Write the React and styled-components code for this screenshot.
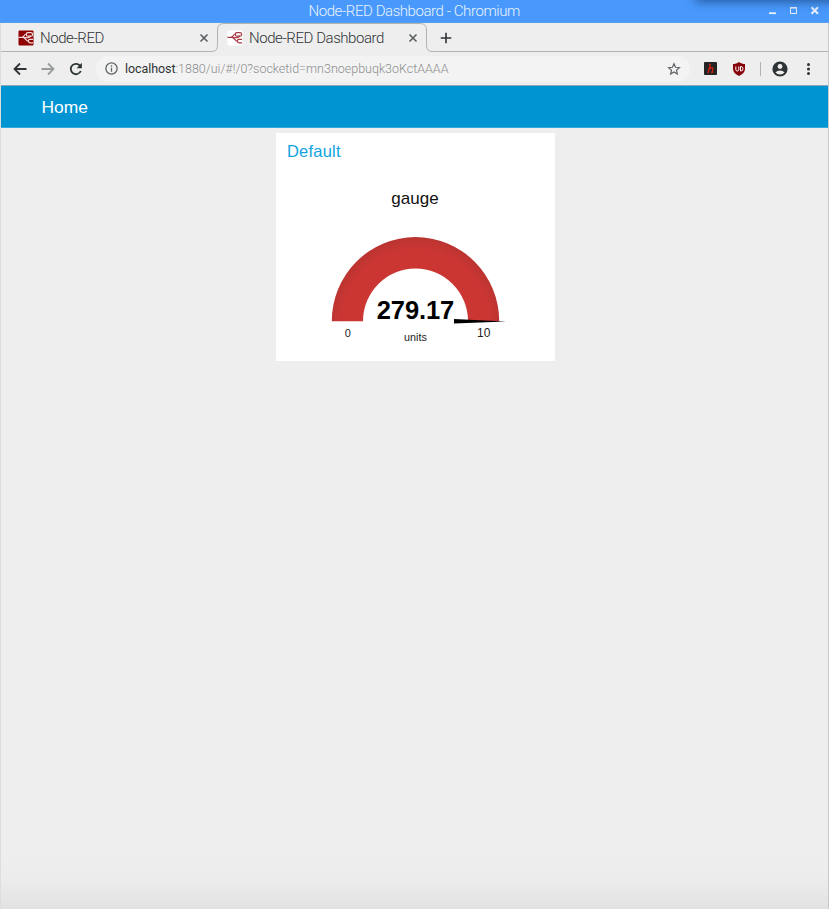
import React from "react";
import styled, { createGlobalStyle } from "styled-components";

const Global = createGlobalStyle`
  *{box-sizing:border-box}
  html,body{margin:0;padding:0}
  body{background:#eee;font-family:"Liberation Sans",Arial,sans-serif;overflow:hidden}
  svg{display:block;flex:none}
`;

const Window = styled.div`
  width:829px;height:909px;display:flex;flex-direction:column;background:#eee;
  border-left:1px solid #dedede;border-right:1px solid #c6c9ce;
`;
const TitleBar = styled.header`
  height:23px;flex:none;display:grid;grid-template-columns:1fr auto 1fr;align-items:center;
  margin:0 -1px;background:linear-gradient(#4899fb 0 22px,#579ff3 22px);
  color:#e9f3ff;font:300 15px/22px Roboto,sans-serif;overflow:hidden;
`;
const Title = styled.div`
  grid-column:2;white-space:nowrap;width:212px;height:23px;letter-spacing:-.43px;
`;
const WindowButtons = styled.div`
  height:23px;display:flex;justify-content:flex-end;position:relative;
  &::before{
    content:"";position:absolute;top:-10px;left:176px;right:-20px;height:10px;
    box-shadow:0 0 11px 1px rgba(25,60,115,.8);
  }
`;
const TabStrip = styled.div`
  height:29px;flex:none;display:flex;position:relative;
`;
const TabOutline = styled.svg`
  position:absolute;left:-1px;top:0;
`;
const Tab = styled.div`
  width:${p => p.$width}px;padding-left:${p => p.$inset}px;
  display:flex;align-items:center;position:relative;height:29px;
`;
const TabTitle = styled.span`
  font:300 15px/20px Roboto,sans-serif;color:#2e3436;margin-left:6px;
  white-space:nowrap;width:${p => p.$width}px;letter-spacing:-.43px;
`;
const Toolbar = styled.div`
  height:34px;flex:none;display:flex;align-items:center;padding-left:11px;
  border-bottom:1px solid #8eaab8;
`;
const NavButtons = styled.div`
  display:flex;align-items:center;gap:12px;width:84px;flex:none;
`;
const AddressBar = styled.div`
  width:594px;height:26px;border-radius:13px;background:#f3f3f3;display:flex;align-items:center;
  padding:0 9px 0 9px;flex:none;
`;
const Address = styled.span`
  flex:1;margin-left:7px;color:#8c8e8f;font:300 12.5px/20px Roboto,sans-serif;white-space:nowrap;
  padding-top:1px;
`;
const Host = styled.span`
  color:#2e3436;font-weight:400;letter-spacing:-.08px;
`;
const Extensions = styled.div`
  display:flex;align-items:center;flex:1;padding-left:14px;
`;
const Separator = styled.div`
  width:1px;height:14px;background:#b2b2b2;margin:0 11px 0 -1px;
`;
const AppHeader = styled.div`
  height:42px;flex:none;background:#0094d3;border-bottom:1px solid #35a8dc;
  color:#fff;padding-left:40.500px;font-size:17.4px;line-height:42px;
`;
const Page = styled.main`
  flex:1;padding-top:5px;
  background:linear-gradient(#eee 0 728px,#ececec 752px,#e2e2e2 100%);
`;
const Card = styled.section`
  width:279px;height:228px;margin-left:275px;background:#fff;display:flex;flex-direction:column;
`;
const CardTitle = styled.h2`
  margin:9px 0 1px 11px;font-size:16.5px;font-weight:400;line-height:18px;color:#0fa3df;
  letter-spacing:.2px;
`;
const Gauge = styled.svg`
  font-family:"Liberation Sans",Arial,sans-serif;
`;

const FlowIcon = ({ dark }) => (
  <svg width="16" height="16" viewBox="0 0 16 16">
    <rect x=".5" y=".5" width="15" height="15" rx="1" fill={dark ? "#8f0000" : "#fff"} />
    <g fill="none" stroke={dark ? "#f5dada" : "#a83a43"} strokeWidth="1.2">
      <path d="M.5 7.300H4C6.200 7.300 6 4 8.500 4" />
      <rect x="8.300" y="2.600" width="6.200" height="3.600" rx="1.500" />
      <path d="M4 7.300C7.500 7.300 8 8 10 7.700s2-1.500 3-1.500M4.500 7.300C8 7.500 7.500 11.300 10.500 11.300M15 9.300h-3c-2.200 0-2.200 3.500 0 3.500h3" />
    </g>
  </svg>
);
const Cross = () => (
  <svg width="10" height="10" viewBox="0 0 10 10"><path d="M1.500 1.500l7 7m0-7l-7 7" stroke="#595d5f" strokeWidth="1.6" /></svg>
);

export default function App() {
  return (
    <>
      <Global />
      <Window>
        <TitleBar>
          <Title>Node-RED Dashboard - Chromium</Title>
          <WindowButtons>
            <svg width="64" height="23" viewBox="0 0 64 23" fill="none" stroke="#eaf2fc">
              <path d="M4 13.200h7" strokeWidth="1.8" />
              <path d="M25.500 7.500h6v6h-6z" strokeWidth="1" /><path d="M25 7.800h7" strokeWidth="1.6" />
              <path d="M46.500 7.200l6.500 6.500m0-6.500l-6.500 6.500" strokeWidth="2" />
            </svg>
          </WindowButtons>
        </TitleBar>
        <TabStrip>
          <TabOutline width="829" height="29" viewBox="0 0 829 29" fill="none" stroke="#b3b3b3">
            <path d="M1 28.500h211q5.500 0 5.500-6V7Q217.500 .5 224 .5h196Q426.500 .5 426.500 7v15.500q0 6 6 6H828" />
          </TabOutline>
          <Tab $width={217} $inset={17}>
            <FlowIcon dark /><TabTitle $width={159}>Node-RED</TabTitle><Cross />
          </Tab>
          <Tab $width={209} $inset={9}>
            <FlowIcon /><TabTitle $width={159}>Node-RED Dashboard</TabTitle><Cross />
          </Tab>
          <Tab $width={40} $inset={13}>
            <svg width="12" height="12" viewBox="0 0 12 12"><path d="M6 .7v10.600M.7 6h10.600" stroke="#2e3436" strokeWidth="1.6" /></svg>
          </Tab>
        </TabStrip>
        <Toolbar>
          <NavButtons>
            <svg width="16" height="16" viewBox="0 0 16 16" fill="none" stroke="#2e3436" strokeWidth="1.8"><path d="M14.500 8H3M8 2.500L2.500 8 8 13.500" /></svg>
            <svg width="16" height="16" viewBox="0 0 16 16" fill="none" stroke="#999c9d" strokeWidth="1.8"><path d="M1.500 8H13M8 2.500L13.500 8 8 13.500" /></svg>
            <svg width="16" height="16" viewBox="0 0 16 16" fill="none" stroke="#2e3436" strokeWidth="1.8"><path d="M12.800 10a5.200 5.200 0 1 1-.3-4.600" /><path d="M13.900 1.800v5.400H8.600z" fill="#2e3436" stroke="none" /></svg>
          </NavButtons>
          <AddressBar>
            <svg width="13" height="13" viewBox="0 0 13 13" fill="none" stroke="#5f6365" strokeWidth="1.3"><circle cx="6.500" cy="6.500" r="5.600" /><path d="M6.500 5.800v4M6.500 3.200v1.500" /></svg>
            <Address><Host>localhost</Host>:1880/ui/#!/0?socketid=mn3noepbuqk3oKctAAAA</Address>
            <svg width="14" height="14" viewBox="0 0 24 24" fill="none" stroke="#5f6365" strokeWidth="2"><path d="M12 3l2.600 6.100 6.700.6-5 4.400 1.500 6.500L12 17.200l-5.800 3.400 1.500-6.500-5-4.400 6.700-.6z" /></svg>
          </AddressBar>
          <Extensions>
            <svg width="13" height="13" viewBox="0 0 13 13"><rect width="13" height="13" rx="1" fill="#242424" /><path d="M6.500 2L4 11M5.300 7.500C7 5 9.300 5 8.800 7L8 10.500l1.300-.5M5 2.300h1.500" fill="none" stroke="#d41f10" strokeWidth="1.300" /></svg>
            <svg width="44" height="16" viewBox="0 0 44 16"><path d="M22 1c2 1.400 4 2 6 2v5c0 3-2.300 5-6 7-3.700-2-6-4-6-7V3c2 0 4-.6 6-2z" fill="#850009" /><path d="M18.800 5.500v3q0 1.500 1.500 1.500t1.500-1.500v-3M23.500 5.500v4.500h.5q2 0 2-2.200t-2-2.300z" fill="none" stroke="#fff" strokeWidth="1" /></svg>
            <Separator />
            <svg width="16" height="16" viewBox="0 0 16 16"><circle cx="8" cy="8" r="7.600" fill="#2e3436" /><circle cx="8" cy="5.500" r="2.400" fill="#eee" /><path d="M3.500 11.500q1.500-2 4.500-2t4.500 2Q10.800 13.600 8 13.600t-4.500-2.100" fill="#eee" /></svg>
            <svg width="40" height="14" viewBox="0 0 40 14" fill="#2e3436"><circle cx="20.500" cy="2.500" r="1.500" /><circle cx="20.500" cy="7" r="1.500" /><circle cx="20.500" cy="11.500" r="1.500" /></svg>
          </Extensions>
        </Toolbar>
        <AppHeader>Home</AppHeader>
        <Page>
          <Card>
            <CardTitle>Default</CardTitle>
            <Gauge width="279" height="200" viewBox="276 161 279 200">
              <defs>
                <radialGradient id="arc" gradientUnits="userSpaceOnUse" cx="415.500" cy="323" r="86">
                  <stop offset=".86" stopColor="#cb3633" /><stop offset="1" stopColor="#b93431" />
                </radialGradient>
              </defs>
              <text x="415" y="204" fontSize="17" textAnchor="middle" fill="#111" textLength="47.500">gauge</text>
              <path d="M331.800 321.300A83.700 84.200 0 0 1 499.200 321.300H468A52.500 52.800 0 0 0 363 321.300Z" fill="url(#arc)" />
              <path d="M454 319l52 2.500-52 2z" fill="#000" />
              <text x="415.500" y="319" fontSize="25.500" fontWeight="700" textAnchor="middle" textLength="77.500">279.17</text>
              <text x="347.700" y="337" fontSize="11" textAnchor="middle" fill="#222">0</text>
              <text x="483.700" y="337" fontSize="12" textAnchor="middle" fill="#222">10</text>
              <text x="415.500" y="341" fontSize="10.800" textAnchor="middle" fill="#222">units</text>
            </Gauge>
          </Card>
        </Page>
      </Window>
    </>
  );
}
